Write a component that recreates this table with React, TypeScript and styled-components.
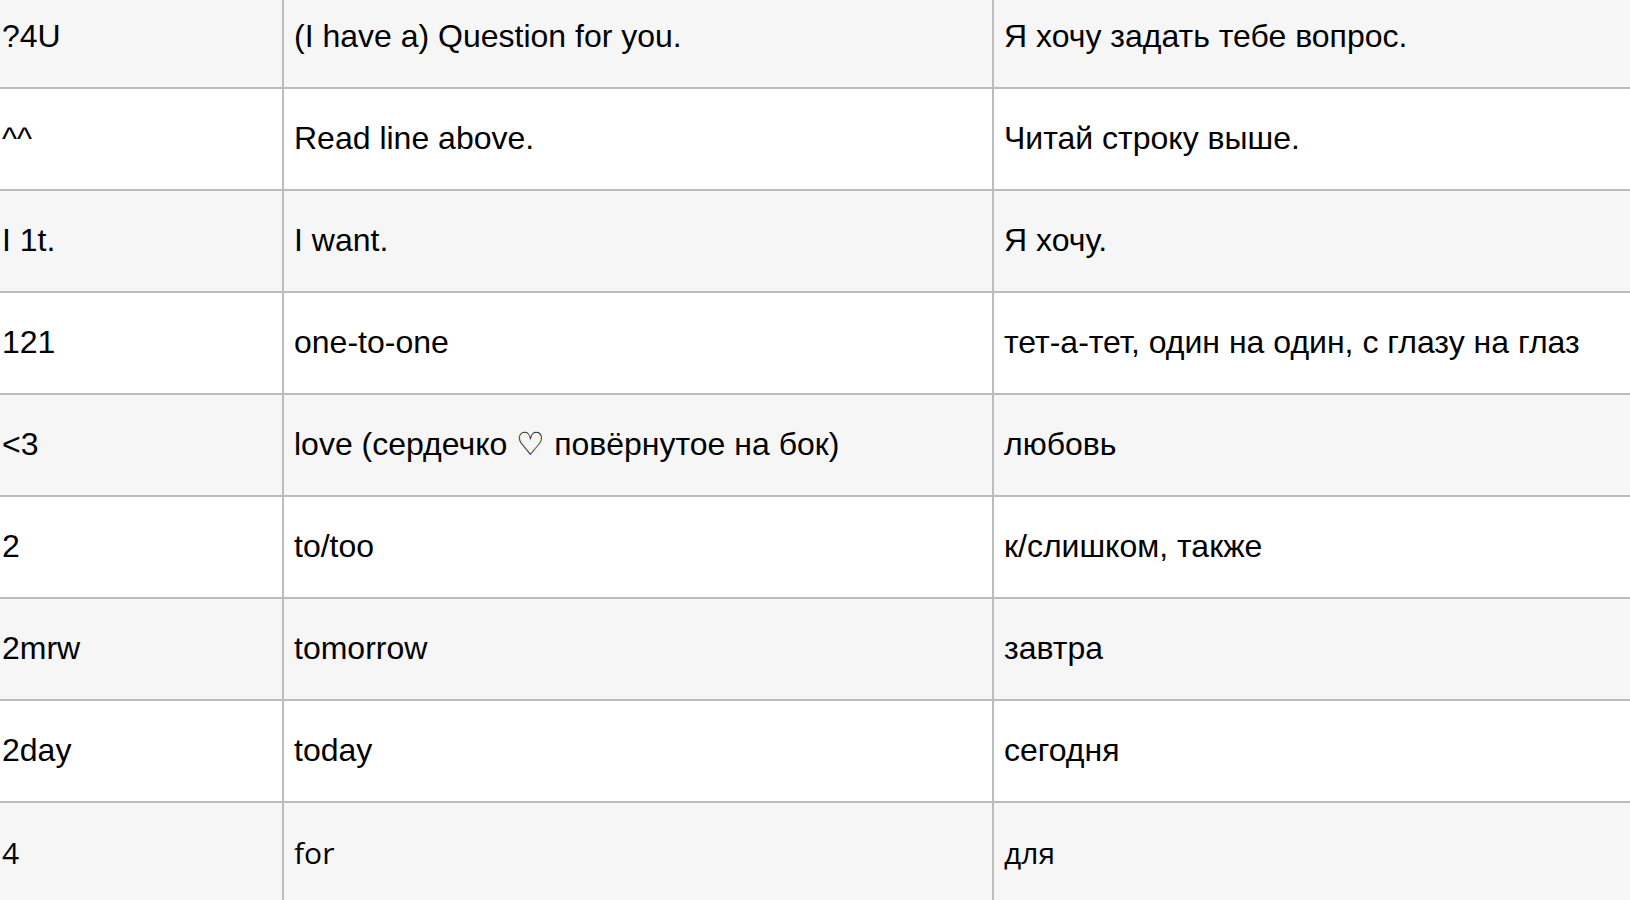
import React from "react";
import styled, { createGlobalStyle } from "styled-components";

const Global = createGlobalStyle`
  html, body {
    margin: 0;
    padding: 0;
    background: #ffffff;
    overflow: hidden;
  }
  body {
    font-family: "Liberation Sans", Arial, Helvetica, sans-serif;
    color: #000;
  }
`;

const Table = styled.table`
  border-collapse: separate;
  border-spacing: 0;
  table-layout: fixed;
  width: calc(100% + 8px);
  margin: -13px 0 0 -8px;
`;

const Col = styled.col<{ $w?: number }>`
  width: ${(p) => (p.$w ? `${p.$w}px` : "auto")};
`;

const Row = styled.tr<{ $alt: boolean }>`
  background: ${(p) => (p.$alt ? "#f6f6f6" : "#ffffff")};
  height: 102px;
`;

const Cell = styled.td<{ $last?: boolean; $alt?: boolean }>`
  box-sizing: border-box;
  height: 102px;
  padding: 0 10px 1px;
  vertical-align: middle;
  border-bottom: 2px solid #bcbcbc;
  border-right: ${(p) => (p.$last ? "none" : "2px solid #bcbcbc")};
  font-family: ${(p) =>
    p.$alt
      ? `"Open Sans", "Noto Sans", sans-serif`
      : `"Liberation Sans", Arial, Helvetica, sans-serif`};
  font-size: ${(p) => (p.$alt ? "30px" : "32px")};
  line-height: 37px;
  white-space: nowrap;
  overflow: hidden;
`;

const rows: [string, string, string][] = [
  ["?4U", "(I have a) Question for you.", "Я хочу задать тебе вопрос."],
  ["^^", "Read line above.", "Читай строку выше."],
  ["I 1t.", "I want.", "Я хочу."],
  ["121", "one-to-one", "тет-а-тет, один на один, с глазу на глаз"],
  ["<3", "love (сердечко ♡ повёрнутое на бок)", "любовь"],
  ["2", "to/too", "к/слишком, также"],
  ["2mrw", "tomorrow", "завтра"],
  ["2day", "today", "сегодня"],
  ["4", "for", "для"],
];

export default function App() {
  return (
    <>
      <Global />
      <Table>
        <colgroup>
          <Col $w={292} />
          <Col $w={710} />
          <Col />
        </colgroup>
        <tbody>
          {rows.map((r, i) => {
            const other = i === rows.length - 1;
            return (
              <Row key={i} $alt={i % 2 === 0}>
                <Cell $alt={other}>{r[0]}</Cell>
                <Cell $alt={other}>{r[1]}</Cell>
                <Cell $alt={other} $last>
                  {r[2]}
                </Cell>
              </Row>
            );
          })}
        </tbody>
      </Table>
    </>
  );
}
